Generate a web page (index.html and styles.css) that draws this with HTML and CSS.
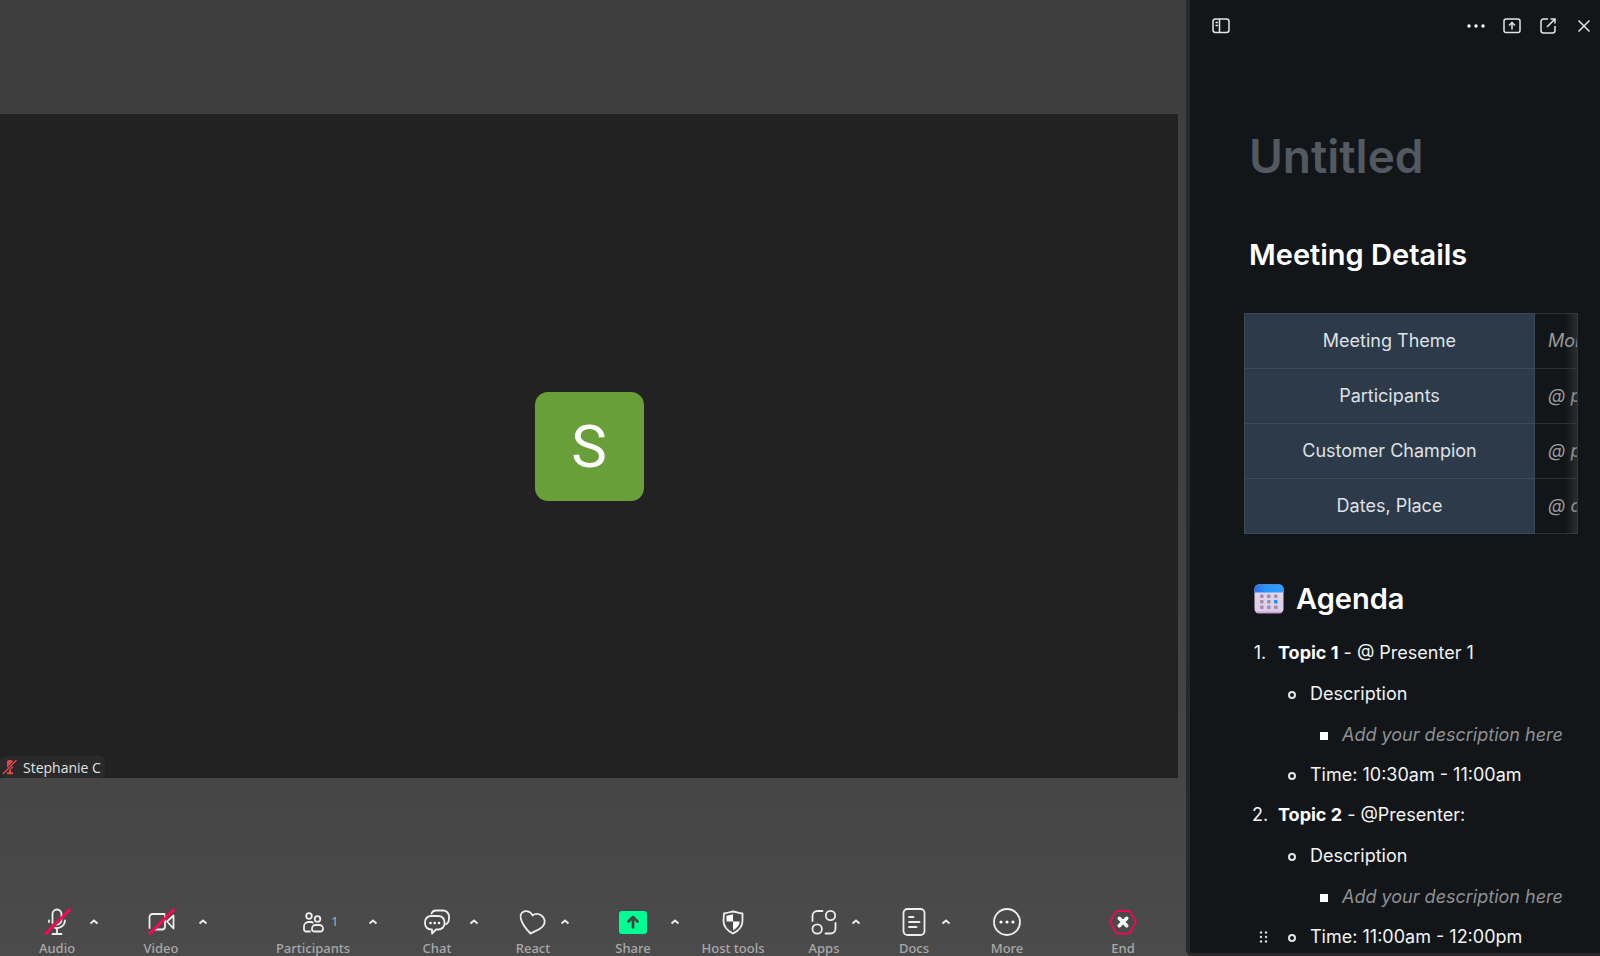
FILE: index.html
```
<!DOCTYPE html>
<html lang="en">
<head>
  <meta charset="UTF-8" />
  <meta name="viewport" content="width=device-width, initial-scale=1.0"/>
  <title>Meeting</title>
  <link rel="stylesheet" href="styles.css">
</head>
<body>
  <main class="meeting">
    <section class="stage">
      <div class="avatar">S</div>
      <div class="name-tag">
        <svg width="16" height="16" viewBox="0 0 16 16" fill="none" stroke="#e0484e">
          <rect x="5" y="1" width="6" height="9" rx="2" fill="#e0484e" stroke="none"/>
          <path d="M8 10v4M5 14.300h6" stroke-width="2"/>
          <path d="M1 15L14.500 1" stroke="#222" stroke-width="3"/>
          <path d="M1 15L14.500 1" stroke-width="1.500"/>
        </svg>
        <span>Stephanie C</span>
      </div>
    </section>

    <nav class="toolbar">
      <div class="group">
        <button class="tool medium" type="button">
          <svg class="icon" viewBox="0 0 32 32">
            <path d="M11.500 17V8a4.500 4.500 0 0 1 9 0v6a4.500 4.500 0 0 1-5 4.500M8 14.500v1.500M24 14.500a8 8 0 0 1-10 7.300M16 22v6M11.500 28h9"/>
            <path class="slash" d="M5 27.500L28.500 4"/>
          </svg>
          <span>Audio</span>
        </button>
        <button class="caret" type="button" aria-label="Audio options"><svg viewBox="0 0 10 6"><path d="M1.500 4.500L5 1.500l3.500 3"/></svg></button>
      </div>
      <div class="group">
        <button class="tool large" type="button">
          <svg class="icon" viewBox="0 0 32 32">
            <path d="M4.500 22V11a3 3 0 0 1 3-3h12M20 10v10.500a3 3 0 0 1-3 3H10M22 15.500L28.500 9.500v13z"/>
            <path class="slash" d="M5 27.500L28.500 4"/>
          </svg>
          <span>Video</span>
        </button>
        <button class="caret" type="button" aria-label="Video options"><svg viewBox="0 0 10 6"><path d="M1.500 4.500L5 1.500l3.500 3"/></svg></button>
      </div>
      <div class="group">
        <button class="tool widest" type="button">
          <svg class="icon" viewBox="0 0 32 32">
            <circle cx="12" cy="10" r="2.800"/>
            <circle cx="20.500" cy="13" r="2.800"/>
            <path d="M13 25.500H9a2 2 0 0 1-2-2v-3a4.500 4.500 0 0 1 4.500-4.500h2.500a2 2 0 0 1 1.800.800"/>
            <path d="M18.500 19h4a3.500 3.500 0 0 1 3.500 3.500v.500a2.500 2.500 0 0 1-2.500 2.500h-6a2.500 2.500 0 0 1-2.500-2.500v-.500a3.500 3.500 0 0 1 3.500-3.500z"/>
          </svg>
          <span>Participants</span>
          <b class="count">1</b>
        </button>
        <button class="caret" type="button" aria-label="Participants options"><svg viewBox="0 0 10 6"><path d="M1.500 4.500L5 1.500l3.500 3"/></svg></button>
      </div>
      <div class="group">
        <button class="tool medium" type="button">
          <svg class="icon" viewBox="0 0 32 32">
            <path d="M10.500 7.500a5 5 0 0 1 4-3H22a6 6 0 0 1 6 6V13a6 6 0 0 1-3 5.200"/>
            <path d="M10 10h7.500a6 6 0 0 1 6 6v1.500a6 6 0 0 1-6 6h-2.500L11 27.500V23.500h-1a6 6 0 0 1-6-6V16a6 6 0 0 1 6-6z"/>
            <g class="solid"><circle cx="9.500" cy="17" r="1.300"/><circle cx="13.700" cy="17" r="1.300"/><circle cx="18" cy="17" r="1.300"/></g>
          </svg>
          <span>Chat</span>
        </button>
        <button class="caret" type="button" aria-label="Chat options"><svg viewBox="0 0 10 6"><path d="M1.500 4.500L5 1.500l3.500 3"/></svg></button>
      </div>
      <div class="group">
        <button class="tool" type="button">
          <svg class="icon" viewBox="0 0 32 32">
            <path d="M13.500 27.500C9 23 5 17.500 3.800 12.500 2.600 8 5.500 4.800 9.500 5.200c3 .300 5 2 6 4.300 2.500-2 6-2 9 0 3.500 2.500 4.300 7 1.500 10.500-2.500 3.500-8 5-12.500 7.500z"/>
          </svg>
          <span>React</span>
        </button>
        <button class="caret" type="button" aria-label="React options"><svg viewBox="0 0 10 6"><path d="M1.500 4.500L5 1.500l3.500 3"/></svg></button>
      </div>
      <div class="group">
        <button class="tool large" type="button">
          <svg class="icon" viewBox="0 0 32 32">
            <rect x="2" y="5" width="28" height="23" rx="3" fill="#00ff93" stroke="none"/>
            <path d="M16 21.500V11.500M11.500 15.500L16 11l4.500 4.500" stroke="#444" stroke-width="2.800"/>
          </svg>
          <span>Share</span>
        </button>
        <button class="caret" type="button" aria-label="Share options"><svg viewBox="0 0 10 6"><path d="M1.500 4.500L5 1.500l3.500 3"/></svg></button>
      </div>
      <div class="group">
        <button class="tool wide" type="button">
          <svg class="icon" viewBox="0 0 32 32">
            <path d="M7 7.500C10 7 13 6 16 5.500c3 .500 6 1.500 9.500 2v7.500c0 5.500-3.500 9.500-9.500 12.500-6-3-9.500-7-9.500-12.500z"/>
            <path class="solid" d="M9.500 15.500V9.700L16 8.200v7.300zM16 15.500h6.800c-.300 3.500-2.800 6.500-6.800 9z"/>
          </svg>
          <span>Host tools</span>
        </button>
      </div>
      <div class="group">
        <button class="tool" type="button">
          <svg class="icon" viewBox="0 0 32 32">
            <circle cx="22.500" cy="9.500" r="4.700"/>
            <circle cx="9.200" cy="23" r="4.700"/>
            <path d="M4.500 15v-5a5 5 0 0 1 5-5h5M27.500 17v5.500a5 5 0 0 1-5 5h-5"/>
          </svg>
          <span>Apps</span>
        </button>
        <button class="caret" type="button" aria-label="Apps options"><svg viewBox="0 0 10 6"><path d="M1.500 4.500L5 1.500l3.500 3"/></svg></button>
      </div>
      <div class="group">
        <button class="tool" type="button">
          <svg class="icon" viewBox="0 0 32 32">
            <rect x="5.500" y="3" width="21" height="26" rx="4"/>
            <path d="M11 11h4.500M11 16h10.500M11 21h7.500"/>
          </svg>
          <span>Docs</span>
        </button>
        <button class="caret" type="button" aria-label="Docs options"><svg viewBox="0 0 10 6"><path d="M1.500 4.500L5 1.500l3.500 3"/></svg></button>
      </div>
      <div class="group">
        <button class="tool" type="button">
          <svg class="icon" viewBox="0 0 32 32">
            <circle cx="16" cy="16" r="13"/>
            <g class="solid"><circle cx="10" cy="16" r="1.600"/><circle cx="16" cy="16" r="1.600"/><circle cx="22" cy="16" r="1.600"/></g>
          </svg>
          <span>More</span>
        </button>
      </div>
      <div class="group">
        <button class="tool" type="button">
          <svg class="icon" viewBox="0 0 32 32">
            <path d="M9.500 5h13L29 16l-6.500 11.500h-13L3 16z" stroke="#ec0b52"/>
            <path d="M12.300 12.300l7.400 7.400M19.700 12.300l-7.400 7.400" stroke="#fff" stroke-width="3.600"/>
          </svg>
          <span>End</span>
        </button>
      </div>
    </nav>
  </main>

  <aside class="panel">
    <header class="panel-bar">
      <button type="button" aria-label="Toggle sidebar">
        <svg viewBox="0 0 20 20"><rect x="2" y="3" width="16" height="13.500" rx="2.500"/><path d="M8.500 3v13.500M4.500 6.500h2.500M4.500 9.500h2.500" /></svg>
      </button>
      <div class="panel-actions">
        <button type="button" aria-label="More">
          <svg viewBox="0 0 20 20"><g class="solid"><circle cx="3" cy="10" r="1.700"/><circle cx="10" cy="10" r="1.700"/><circle cx="17" cy="10" r="1.700"/></g></svg>
        </button>
        <button type="button" aria-label="Share">
          <svg viewBox="0 0 20 20"><rect x="2" y="3" width="16" height="13.500" rx="2"/><path d="M10 13.500V7M7 9.500l3-3 3 3"/></svg>
        </button>
        <button type="button" aria-label="Open in new window">
          <svg viewBox="0 0 20 20"><path d="M10 3H5.500A2.500 2.500 0 0 0 3 5.500v9A2.500 2.500 0 0 0 5.500 17h9a2.500 2.500 0 0 0 2.500-2.500V10M9 11l7.500-7.500M12.500 3H17v4.500"/></svg>
        </button>
        <button type="button" aria-label="Close">
          <svg viewBox="0 0 20 20"><path d="M4.500 4.500l11 11M15.500 4.500l-11 11"/></svg>
        </button>
      </div>
    </header>

    <article class="doc">
      <h1>Untitled</h1>
      <h2>Meeting Details</h2>

      <div class="table-wrap">
        <table>
          <tr><th scope="row">Meeting Theme</th><td>Monthly</td></tr>
          <tr><th scope="row">Participants</th><td>@ people</td></tr>
          <tr><th scope="row">Customer Champion</th><td>@ people</td></tr>
          <tr><th scope="row">Dates, Place</th><td>@ date</td></tr>
        </table>
      </div>

      <h2 class="agenda">
        <svg width="30" height="30" viewBox="0 0 30 30">
          <defs>
            <linearGradient id="calTop"><stop offset="0" stop-color="#2b6ff0"/><stop offset=".4" stop-color="#2a96fb"/><stop offset="1" stop-color="#2f9dff"/></linearGradient>
            <linearGradient id="calBody" x2="0" y2="1"><stop offset="0" stop-color="#e6d9f0"/><stop offset=".9" stop-color="#ddcde8"/><stop offset="1" stop-color="#b895cf"/></linearGradient>
          </defs>
          <rect x=".5" y=".5" width="29" height="29" rx="4.500" fill="url(#calBody)"/>
          <path d="M.5 8.500V5A4.500 4.500 0 0 1 5 .5h20A4.500 4.500 0 0 1 29.500 5v3.500z" fill="url(#calTop)"/>
          <g fill="#9d90ab">
            <rect x="6" y="10.500" width="3.600" height="3.600" rx="1"/><rect x="13" y="10.500" width="3.600" height="3.600" rx="1"/><rect x="20" y="10.500" width="3.600" height="3.600" rx="1"/>
            <rect x="6" y="16" width="3.600" height="3.600" rx="1"/><rect x="13" y="16" width="3.600" height="3.600" rx="1"/><rect x="20" y="16" width="3.600" height="3.600" rx="1" fill="#1e8ff5"/>
            <rect x="6" y="21.500" width="3.600" height="3.600" rx="1"/><rect x="13" y="21.500" width="3.600" height="3.600" rx="1"/><rect x="20" y="21.500" width="3.600" height="3.600" rx="1"/>
          </g>
        </svg>
        Agenda
      </h2>

      <ol class="topics">
        <li>
          <div><strong>Topic 1</strong> - @ Presenter 1
            <ul class="circles">
              <li>
                <div>Description
                  <ul class="squares">
                    <li><div class="hint">Add your description here</div></li>
                  </ul>
                </div>
              </li>
              <li><div>Time: 10:30am - 11:00am</div></li>
            </ul>
          </div>
        </li>
        <li>
          <div><strong>Topic 2</strong> - @Presenter:
            <ul class="circles">
              <li>
                <div>Description
                  <ul class="squares">
                    <li><div class="hint">Add your description here</div></li>
                  </ul>
                </div>
              </li>
              <li class="active">
                <button class="drag" type="button" aria-label="Drag block">
                  <svg width="10" height="14" viewBox="0 0 10 14" fill="#d5d6d7"><circle cx="3" cy="2.500" r="1.200"/><circle cx="8" cy="2.500" r="1.200"/><circle cx="3" cy="7" r="1.200"/><circle cx="8" cy="7" r="1.200"/><circle cx="3" cy="11.500" r="1.200"/><circle cx="8" cy="11.500" r="1.200"/></svg>
                </button>
                <div>Time: 11:00am - 12:00pm</div>
              </li>
            </ul>
          </div>
        </li>
      </ol>
    </article>
  </aside>
</body>
</html>
```
FILE: styles.css
```
*, *::before, *::after {
  box-sizing: border-box;
}
body {
  margin: 0;
  height: 100vh;
  display: grid;
  grid-template-columns: minmax(0, 1fr) 414px;
  grid-template-rows: 100vh;
  overflow: hidden;
  background: linear-gradient(#3e3e3e 0%, #404040 50%, #464646 84%, #4b4b4b 100%);
  font-family: "Noto Sans", sans-serif;
}
button {
  padding: 0;
  border: none;
  background: none;
  color: inherit;
  font: inherit;
  cursor: pointer;
}
.solid {
  fill: #fff;
  stroke: none;
}

/* meeting side */
.meeting {
  display: flex;
  flex-direction: column;
  padding-top: 114px;
}
.stage {
  flex: 1;
  display: flex;
  align-items: center;
  justify-content: center;
  position: relative;
  margin-right: 8px;
  background: #222;
}
.avatar {
  display: flex;
  align-items: center;
  justify-content: center;
  width: 109px;
  height: 109px;
  padding-top: 2px;
  border-radius: 13px;
  background: #689f38;
  color: #fff;
  font: 60px/1 Roboto, sans-serif;
}
.name-tag {
  position: absolute;
  left: 0;
  bottom: 0;
  display: flex;
  align-items: center;
  gap: 5px;
  height: 22px;
  padding: 0 4px 0 2px;
  border-radius: 6px;
  background: #2a2a2a;
  color: #e2e2e2;
  font-family: "Open Sans", sans-serif;
  font-size: 14px;
}

.toolbar {
  display: grid;
  grid-template-columns: 99fr 134fr 147fr 101fr 90fr 94fr 107fr 90fr 93fr 116fr 83fr;
  align-items: end;
  height: 178px;
  padding-left: 32px;
}
.group {
  display: flex;
  align-items: flex-start;
}
.tool {
  position: relative;
  display: flex;
  flex-direction: column;
  align-items: center;
  gap: 2px;
  width: 40px;
  color: #a9a9a9;
  font-size: 13px;
  font-weight: 500;
  line-height: 16px;
  white-space: nowrap;
}
.tool.medium {
  width: 50px;
}
.tool.large {
  width: 60px;
}
.tool.wide {
  width: 72px;
}
.tool.widest {
  width: 96px;
}
.icon {
  width: 32px;
  height: 32px;
  fill: none;
  stroke: #eee;
  stroke-width: 1.8;
  stroke-linecap: round;
  stroke-linejoin: round;
}
.icon .slash {
  stroke: #ff0552;
  stroke-width: 3;
}
.icon .solid {
  stroke: none;
}
.count {
  position: absolute;
  top: 7px;
  left: 66px;
  color: #a9b0b8;
  font-weight: 400;
}
.caret {
  display: flex;
  align-items: center;
  justify-content: center;
  width: 24px;
  height: 32px;
}
.caret svg {
  width: 10px;
  height: 6px;
  fill: none;
  stroke: #eee;
  stroke-width: 2;
}

/* docs side */
.panel {
  display: flex;
  flex-direction: column;
  border-left: 4px solid #29292b;
  border-bottom: 3px solid #29292b;
  border-bottom-left-radius: 6px;
  background: #121619;
  color: #f2f3f3;
  font-family: Inter, sans-serif;
  overflow: hidden;
}
.panel-bar {
  display: flex;
  flex-shrink: 0;
  justify-content: space-between;
  align-items: center;
  height: 52px;
  padding: 0 6px 0 21px;
}
.panel-actions {
  display: flex;
  gap: 16px;
}
.panel-bar button {
  display: flex;
}
.panel-bar svg {
  width: 20px;
  height: 20px;
  fill: none;
  stroke: #e4e5e5;
  stroke-width: 1.5;
}
.panel-bar .solid {
  stroke: none;
}
.doc {
  padding: 0 22px 0 59px;
  font-size: 18px;
}
h1 {
  margin: 76px 0 0;
  color: #535960;
  font-size: 46px;
  font-weight: 600;
  line-height: 56px;
}
h2 {
  margin: 51px 0 0;
  color: #fff;
  font-size: 29px;
  font-weight: 600;
  line-height: 40px;
}
.table-wrap {
  position: relative;
  margin: 38px 0 0 -5px;
  border-right: 1px solid #33373a;
  overflow: hidden;
}
.table-wrap::after {
  content: "";
  position: absolute;
  top: 0;
  right: 0;
  bottom: 0;
  width: 12px;
  background: linear-gradient(to right, transparent, rgba(90, 93, 96, 0.3));
}
table {
  width: 400px;
  border-collapse: collapse;
  table-layout: fixed;
}
th, td {
  height: 55px;
  padding: 0 0 2px;
  border: 1px solid #2a2e31;
}
th {
  width: 290px;
  border-color: #3b4958;
  background: #2c3a4a;
  color: #dfe1e4;
  font-weight: 400;
}
td {
  padding-left: 13px;
  color: #9a9b9c;
  font-style: italic;
}
.agenda {
  display: flex;
  align-items: center;
  gap: 12px;
  margin: 45px 0 0 5px;
}
ol, ul {
  margin: 0;
  padding: 0;
  list-style: none;
}
.topics {
  margin: 14px 0 0 5px;
  line-height: 40px;
  counter-reset: topic;
}
.topics ul {
  margin: 1px 0 0 8px;
}
.topics li {
  display: grid;
  grid-template-columns: 12px 1fr;
  gap: 12px;
  white-space: nowrap;
}
.topics li::before {
  justify-self: center;
}
.topics > li {
  counter-increment: topic;
}
.topics > li::before {
  content: counter(topic) ".";
}
.circles > li::before {
  content: "";
  width: 8px;
  height: 8px;
  margin-top: 17px;
  border: 2px solid #e4e5e5;
  border-radius: 50%;
}
.topics .squares > li::before {
  content: "";
  width: 8px;
  height: 8px;
  margin-top: 17px;
  border: none;
  border-radius: 0;
  background: #fff;
}
.topics strong {
  color: #fff;
  font-weight: 700;
}
.hint {
  color: #8f9192;
  font-style: italic;
}
.active {
  position: relative;
}
.drag {
  position: absolute;
  top: 13px;
  left: -28px;
  display: flex;
}
```
